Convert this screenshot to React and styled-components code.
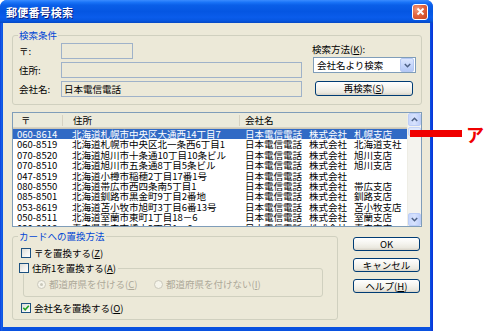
import React from "react";
import styled, { createGlobalStyle } from "styled-components";

const GlobalStyle = createGlobalStyle`
  html, body { margin: 0; padding: 0; background: #fff; }
  body {
    font-family: "Noto Sans CJK JP", "Noto Sans", sans-serif;
    font-size: 9.5px;
    color: #000;
  }
`;

const rows = [
  ["060-8614", "北海道札幌市中央区大通西14丁目7", "札幌支店"],
  ["060-8519", "北海道札幌市中央区北一条西6丁目1", "北海道支社"],
  ["070-8520", "北海道旭川市十条通10丁目10条ビル", "旭川支店"],
  ["070-8510", "北海道旭川市五条通8丁目5条ビル", "旭川支店"],
  ["047-8519", "北海道小樽市稲穂2丁目17番1号", ""],
  ["080-8550", "北海道帯広市西四条南5丁目1", "帯広支店"],
  ["085-8501", "北海道釧路市黒金町9丁目2番地", "釧路支店"],
  ["053-8619", "北海道苫小牧市旭町3丁目6番13号", "苫小牧支店"],
  ["050-8511", "北海道室蘭市東町1丁目18－6", "室蘭支店"],
  ["030-8518", "青森県青森市橋本2丁目1－6", "青森支店"],
];

const Page = styled.div`
  position: relative;
  width: 485px;
  height: 331px;
  overflow: hidden;
  background: #fff;
`;

const Window = styled.div`
  width: 433px;
  height: 331px;
  box-sizing: border-box;
  display: flex;
  flex-direction: column;
  background: linear-gradient(90deg, #0831d9 0px, #1660e8 1px, #0a52e0 3px, #0a52e0 calc(100% - 3px), #0831d9 100%);
  border-radius: 7px 7px 0 0;
`;

const TitleBar = styled.div`
  height: 23px;
  flex: none;
  display: flex;
  align-items: center;
  justify-content: space-between;
  padding: 0 5px 0 6px;
  border-radius: 7px 7px 0 0;
  background: linear-gradient(
    180deg,
    #3a8cff 0%,
    #1a74f8 10%,
    #0a5fe8 22%,
    #0556e2 50%,
    #0a5ceb 75%,
    #0656e0 90%,
    #0548c4 100%
  );
`;

const Title = styled.span`
  color: #fff;
  font-weight: bold;
  font-size: 11px;
  letter-spacing: 0.2px;
  text-shadow: 1px 1px 0 #0a1c7a;
`;

const CloseButton = styled.div`
  width: 14px;
  height: 14px;
  border: 1px solid #fff;
  border-radius: 3px;
  display: flex;
  align-items: center;
  justify-content: center;
  background: radial-gradient(circle at 30% 30%, #f29a7c 0%, #e2643e 45%, #c8421c 100%);
`;

const Client = styled.div`
  flex: 1;
  margin: 0 3px 4px;
  background: #ece9d8;
  padding: 6px 8px 0 9px;
  display: flex;
  flex-direction: column;
`;

const Group = styled.fieldset`
  margin: 0;
  padding: 2px 5px 7px 6px;
  border: 1px solid #d0d0bf;
  border-radius: 3px;
  min-width: 0;
`;

const GroupTitle = styled.legend`
  padding: 0 1px;
  margin-left: -1px;
  color: #0046d5;
  line-height: 12px;
`;

const SearchLayout = styled.div`
  display: flex;
  justify-content: space-between;
`;

const FormGrid = styled.div`
  display: grid;
  grid-template-columns: 42px auto;
  grid-auto-rows: 16px;
  row-gap: 3px;
  align-items: center;
`;

const Label = styled.span`
  line-height: 12px;
  white-space: nowrap;
`;

const TextBox = styled.div`
  box-sizing: border-box;
  width: ${(p) => p.$width}px;
  height: 16px;
  border: 1px solid #9fb2c9;
  background: #ece9d8;
  padding: 0 2px;
  line-height: 14px;
`;

const SideColumn = styled.div`
  width: 103px;
  display: flex;
  flex-direction: column;
`;

const SideLabel = styled(Label)`
  margin-left: -1px;
  height: 12px;
`;

const Select = styled.div`
  box-sizing: border-box;
  margin-top: 2px;
  height: 16px;
  border: 1px solid #7f9db9;
  background: #fff;
  display: flex;
  align-items: center;
  justify-content: space-between;
  padding: 0 1px 0 3px;
`;

const DropButton = styled.div`
  width: 12px;
  height: 12px;
  border: 1px solid #b5c8f3;
  border-radius: 2px;
  background: linear-gradient(180deg, #dce6fd 0%, #c3d4fb 60%, #b4c8f6 100%);
  display: flex;
  align-items: center;
  justify-content: center;
`;

const Button = styled.div`
  box-sizing: border-box;
  width: ${(p) => p.$width || 67}px;
  height: ${(p) => p.$height || 14}px;
  margin: ${(p) => p.$margin || "0"};
  border: 1px solid #003c74;
  border-radius: 3px;
  background: linear-gradient(180deg, #ffffff 0%, #f5f4ef 45%, #ebe9e0 80%, #d8d3c8 100%);
  text-align: center;
  line-height: 12px;
  white-space: nowrap;
`;

const ListView = styled.div`
  margin-top: 7px;
  height: 115px;
  box-sizing: border-box;
  border: 1px solid #7f9db9;
  background: #fff;
  display: flex;
  overflow: hidden;
`;

const ListMain = styled.div`
  flex: 1;
  min-width: 0;
  display: flex;
  flex-direction: column;
`;

const Header = styled.div`
  height: 16px;
  flex: none;
  display: flex;
  background: #ebeadb;
  box-shadow: inset 0 -1px #cbc7b8, inset 0 -2px #d6d2c2;
`;

const HeaderCell = styled.div`
  box-sizing: border-box;
  width: ${(p) => (p.$width ? `${p.$width}px` : "auto")};
  flex: ${(p) => (p.$width ? "none" : "1")};
  padding-left: ${(p) => p.$pad}px;
  line-height: 11px;
  border-right: ${(p) => (p.$width ? "1px solid #d6d2c2" : "none")};
  margin: 2px 0 3px;
`;

const Rows = styled.div`
  flex: 1;
  overflow: hidden;
`;

const Row = styled.div`
  display: flex;
  height: 10.4px;
  line-height: 10.4px;
  white-space: nowrap;
  background: ${(p) => (p.$selected ? "#316ac5" : "transparent")};
  color: ${(p) => (p.$selected ? "#fff" : "#000")};
`;

const Cell = styled.div`
  box-sizing: border-box;
  width: ${(p) => (p.$width ? `${p.$width}px` : "auto")};
  flex: ${(p) => (p.$width ? "none" : "1")};
  padding-left: 4px;
  overflow: hidden;
`;

const CompanyCell = styled(Cell)`
  display: flex;
  gap: 7px;
`;

const ScrollBar = styled.div`
  width: 13px;
  flex: none;
  display: flex;
  flex-direction: column;
  background: #f4f3ee;
  border-left: 1px solid #eeede5;
`;

const ScrollArrow = styled.div`
  box-sizing: border-box;
  height: 13px;
  border: 1px solid #bccdf6;
  border-radius: 2px;
  background: linear-gradient(90deg, #c8d7fc 0%, #d7e2fd 50%, #bfd0fa 100%);
  display: flex;
  align-items: center;
  justify-content: center;
`;

const ScrollThumb = styled.div`
  box-sizing: border-box;
  height: 9px;
  margin-top: 1px;
  border: 1px solid #c6d5f8;
  border-radius: 2px;
  background: #dde7fd;
`;

const ScrollTrack = styled.div`
  flex: 1;
`;

const BottomArea = styled.div`
  margin-top: 3px;
  display: flex;
  gap: 15px;
`;

const ReplaceGroup = styled(Group)`
  width: 326px;
  box-sizing: border-box;
  padding: 0 6px 5px;
`;

const ReplaceBody = styled.div`
  display: flex;
  flex-direction: column;
  padding-left: 2px;
`;

const CheckRow = styled.label`
  display: flex;
  align-items: center;
  gap: 3px;
  height: 12px;
  line-height: 12px;
  margin-top: ${(p) => p.$top || 0}px;
  white-space: nowrap;
`;

const CheckBox = styled.span`
  box-sizing: border-box;
  width: 10px;
  height: 10px;
  flex: none;
  border: 1px solid #1c5180;
  background: linear-gradient(135deg, #dcdcd7 0%, #f4f4f2 60%, #ffffff 100%);
  display: flex;
  align-items: center;
  justify-content: center;
`;

const AddressGroup = styled.fieldset`
  margin: 3px 0 0 2px;
  width: 300px;
  box-sizing: border-box;
  padding: 0 6px 6px 13px;
  border: 1px solid #d0d0bf;
  border-radius: 3px;
  min-width: 0;
`;

const AddressLegend = styled.legend`
  padding: 0 2px 0 0;
  margin-left: -18px;
  background: #ece9d8;
`;

const RadioRow = styled.div`
  display: grid;
  grid-template-columns: 117px auto;
  margin-top: 4px;
  color: #aca899;
  line-height: 12px;
`;

const RadioItem = styled.span`
  display: flex;
  align-items: center;
  gap: 3px;
  white-space: nowrap;
`;

const Radio = styled.span`
  box-sizing: border-box;
  width: 9px;
  height: 9px;
  flex: none;
  border-radius: 50%;
  border: 1px solid #cac8bb;
  background: #f5f4ea;
  display: flex;
  align-items: center;
  justify-content: center;
  &::after {
    content: "";
    width: 3px;
    height: 3px;
    border-radius: 50%;
    background: ${(p) => (p.$on ? "#cac8bb" : "transparent")};
  }
`;

const ButtonColumn = styled.div`
  padding-top: 7px;
  display: flex;
  flex-direction: column;
  gap: 7px;
`;

const Marker = styled.div`
  position: absolute;
  left: 410px;
  top: 130px;
  width: 52px;
  height: 7px;
  background: #f00000;
`;

const MarkerLabel = styled.span`
  position: absolute;
  left: 466px;
  top: 123px;
  font-size: 18px;
  line-height: 22px;
  font-weight: bold;
  color: #f00000;
`;

const Chevron = ({ up }) => (
  <svg width="7" height="5" viewBox="0 0 7 5">
    <path
      d={up ? "M0.8 4 L3.5 1.3 L6.2 4" : "M0.8 1 L3.5 3.7 L6.2 1"}
      fill="none"
      stroke="#4d6185"
      strokeWidth="1.5"
    />
  </svg>
);

const Check = () => (
  <svg width="8" height="8" viewBox="0 0 8 8">
    <path d="M1.3 3.8 L3.2 5.8 L6.8 1.8" fill="none" stroke="#21a121" strokeWidth="1.6" />
  </svg>
);

// caption with its access key underlined, e.g. 再検索(S)
const Caption = ({ text, k }) => (
  <span>
    {text}(<u>{k}</u>)
  </span>
);

export default function App() {
  return (
    <Page>
      <GlobalStyle />
      <Window>
        <TitleBar>
          <Title>郵便番号検索</Title>
          <CloseButton>
            <svg width="9" height="9" viewBox="0 0 9 9">
              <path d="M1.5 1.5 L7.5 7.5 M7.5 1.5 L1.5 7.5" stroke="#fff" strokeWidth="1.8" />
            </svg>
          </CloseButton>
        </TitleBar>
        <Client>
          <Group>
            <GroupTitle>検索条件</GroupTitle>
            <SearchLayout>
              <FormGrid>
                <Label>〒:</Label>
                <TextBox $width={72} />
                <Label>住所:</Label>
                <TextBox $width={241} />
                <Label>会社名:</Label>
                <TextBox $width={241}>日本電信電話</TextBox>
              </FormGrid>
              <SideColumn>
                <SideLabel>
                  <Caption text="検索方法" k="K" />:
                </SideLabel>
                <Select>
                  <span>会社名より検索</span>
                  <DropButton>
                    <Chevron />
                  </DropButton>
                </Select>
                <Button $width={98} $height={15} $margin="8px 0 0 2px">
                  <Caption text="再検索" k="S" />
                </Button>
              </SideColumn>
            </SearchLayout>
          </Group>

          <ListView>
            <ListMain>
              <Header>
                <HeaderCell $width={50} $pad={8}>〒</HeaderCell>
                <HeaderCell $width={177} $pad={10}>住所</HeaderCell>
                <HeaderCell $pad={5}>会社名</HeaderCell>
              </Header>
              <Rows>
                {rows.map(([zip, addr, branch], i) => (
                  <Row key={zip + i} $selected={i === 0}>
                    <Cell $width={55}>{zip}</Cell>
                    <Cell $width={173}>{addr}</Cell>
                    <CompanyCell>
                      <span>日本電信電話</span>
                      <span>株式会社</span>
                      <span>{branch}</span>
                    </CompanyCell>
                  </Row>
                ))}
              </Rows>
            </ListMain>
            <ScrollBar>
              <ScrollArrow>
                <Chevron up />
              </ScrollArrow>
              <ScrollThumb />
              <ScrollTrack />
              <ScrollArrow>
                <Chevron />
              </ScrollArrow>
            </ScrollBar>
          </ListView>

          <BottomArea>
            <ReplaceGroup>
              <GroupTitle>カードへの置換方法</GroupTitle>
              <ReplaceBody>
                <CheckRow $top={5}>
                  <CheckBox />
                  <Caption text="〒を置換する" k="Z" />
                </CheckRow>
                <AddressGroup>
                  <AddressLegend>
                    <CheckRow>
                      <CheckBox />
                      <Caption text="住所1を置換する" k="A" />
                    </CheckRow>
                  </AddressLegend>
                  <RadioRow>
                    <RadioItem>
                      <Radio $on />
                      <Caption text="都道府県を付ける" k="C" />
                    </RadioItem>
                    <RadioItem>
                      <Radio />
                      <Caption text="都道府県を付けない" k="I" />
                    </RadioItem>
                  </RadioRow>
                </AddressGroup>
                <CheckRow $top={5}>
                  <CheckBox>
                    <Check />
                  </CheckBox>
                  <Caption text="会社名を置換する" k="O" />
                </CheckRow>
              </ReplaceBody>
            </ReplaceGroup>
            <ButtonColumn>
              <Button>OK</Button>
              <Button>キャンセル</Button>
              <Button>
                <Caption text="ヘルプ" k="H" />
              </Button>
            </ButtonColumn>
          </BottomArea>
        </Client>
      </Window>
      <Marker />
      <MarkerLabel>ア</MarkerLabel>
    </Page>
  );
}
